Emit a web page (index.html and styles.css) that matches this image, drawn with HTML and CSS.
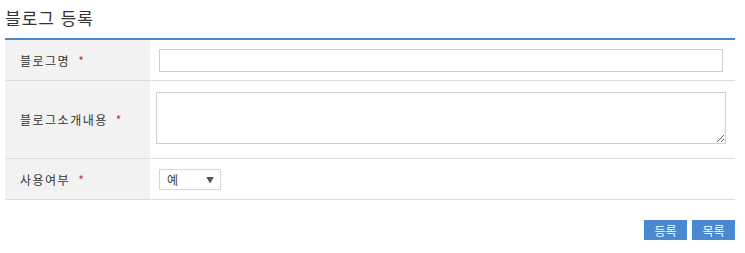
FILE: index.html
```html
<!DOCTYPE html>
<html lang="ko">
<head>
  <meta charset="UTF-8" />
  <title>블로그 등록</title>
  <link rel="stylesheet" href="styles.css">
</head>
<body>
  <div class="wrap">
    <h2 class="title">블로그 등록</h2>

    <div class="form">
      <div class="row">
        <div class="label">블로그명 <span class="req">*</span></div>
        <div class="field"><input type="text" class="input-name"></div>
      </div>
      <div class="row row-tall">
        <div class="label">블로그소개내용 <span class="req">*</span></div>
        <div class="field"><textarea class="input-desc"></textarea></div>
      </div>
      <div class="row">
        <div class="label">사용여부 <span class="req">*</span></div>
        <div class="field">
          <div class="select">
            <span>예</span>
            <span class="arrow">▼</span>
          </div>
        </div>
      </div>
    </div>

    <div class="actions">
      <button class="btn">등록</button>
      <button class="btn">목록</button>
    </div>
  </div>
</body>
</html>
```

FILE: styles.css
```css
* {
  margin: 0;
  padding: 0;
  box-sizing: border-box;
}

body {
  font-family: "Noto Sans CJK KR", "Noto Sans", sans-serif;
  background: #fff;
  color: #333;
}

.wrap {
  width: 730px;
  margin-left: 5px;
}

.title {
  font-size: 17px;
  font-weight: normal;
  line-height: 20px;
  letter-spacing: 1px;
  padding-top: 8px;
  height: 38px;
  color: #333;
}

.form {
  border-top: 2px solid #4a88cc;
}

.row {
  display: grid;
  grid-template-columns: 145px 1fr;
  height: 41px;
  border-bottom: 1px solid #dcdcdc;
}

.row-tall {
  height: 78px;
}

.label {
  background: #f2f2f2;
  display: flex;
  align-items: center;
  padding-left: 15px;
  font-size: 12px;
  letter-spacing: 1.5px;
  color: #333;
}

.req {
  color: #c0392b;
  margin-left: 8px;
}

.field {
  display: flex;
  align-items: center;
  padding-left: 9px;
}

.input-name {
  width: 564px;
  height: 23px;
  border: 1px solid #cfcfcf;
  outline: none;
}

.input-desc {
  display: block;
  width: 570px;
  height: 52px;
  margin-left: -3px;
  margin-top: -3px;
  border: 1px solid #cfcfcf;
  outline: none;
  resize: vertical;
}

.select {
  width: 62px;
  height: 21px;
  border: 1px solid #d6d6d6;
  display: flex;
  align-items: center;
  justify-content: space-between;
  padding: 0 6px 0 7px;
  font-size: 12px;
  color: #444;
}

.select .arrow {
  font-size: 8px;
  color: #555;
}

.actions {
  display: flex;
  justify-content: flex-end;
  gap: 5px;
  margin-top: 20px;
}

.btn {
  width: 43px;
  height: 20px;
  border: none;
  background: #4a88cf;
  color: #fff;
  font-family: inherit;
  font-size: 12px;
  cursor: pointer;
}
```
